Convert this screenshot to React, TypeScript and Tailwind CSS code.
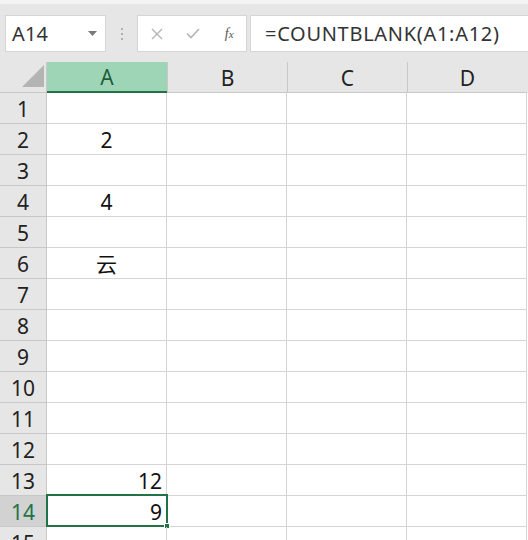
import React from "react";

const rows = Array.from({ length: 15 }, (_, i) => i + 1);
const values: Record<number, { v: string; align: "center" | "right" }> = {
  2: { v: "2", align: "center" },
  4: { v: "4", align: "center" },
  6: { v: "云", align: "center" },
  13: { v: "12", align: "right" },
  14: { v: "9", align: "right" },
};

const font = { fontFamily: '"Noto Sans", "Noto Sans CJK SC", sans-serif' };

export default function App() {
  return (
    <div className="w-[528px] h-[540px] overflow-hidden bg-white" style={font}>
      {/* toolbar */}
      <div className="h-[62px] bg-[#e6e6e6] flex flex-col">
        <div className="h-[4px] bg-[#f3f3f3]" />
        <div className="flex items-start pt-[11px] pl-[5px]">
          <div className="w-[101px] h-[37px] bg-white border border-[#d5d5d5] flex items-center justify-between pl-[6px] pr-[8px]">
            <span className="text-[20px] text-[#333] tracking-[0.2px]">A14</span>
            <svg width="9" height="5" viewBox="0 0 9 5">
              <path d="M0 0 L9 0 L4.5 5 Z" fill="#7a7a7a" />
            </svg>
          </div>
          <div className="w-[31px] h-[37px] flex flex-col items-center justify-center gap-[3px]">
            <div className="w-[2px] h-[2px] bg-[#b0b0b0]" />
            <div className="w-[2px] h-[2px] bg-[#b0b0b0]" />
            <div className="w-[2px] h-[2px] bg-[#b0b0b0]" />
          </div>
          <div className="w-[110px] h-[37px] bg-white border border-[#d5d5d5] flex items-center">
            <div className="w-[36px] flex justify-center ml-[1px]">
              <svg width="12" height="12" viewBox="0 0 12 12">
                <path d="M1 1 L11 11 M11 1 L1 11" stroke="#b5b5b5" strokeWidth="1.4" />
              </svg>
            </div>
            <div className="w-[38px] flex justify-center">
              <svg width="14" height="11" viewBox="0 0 14 11">
                <path d="M1 5.5 L5 9.5 L13 1" stroke="#b5b5b5" strokeWidth="1.6" fill="none" />
              </svg>
            </div>
            <div className="w-[34px] flex justify-center">
              <span
                className="text-[14px] text-[#555] italic"
                style={{ fontFamily: '"Liberation Serif", serif' }}
              >
                f<span className="text-[11px]">x</span>
              </span>
            </div>
          </div>
          <div className="ml-[3px] flex-1 h-[37px] bg-white border border-[#d5d5d5] border-r-0 flex items-center pl-[14px]">
            <span className="text-[20px] text-[#333] tracking-[0.7px]">=COUNTBLANK(A1:A12)</span>
          </div>
        </div>
      </div>

      {/* column header */}
      <div className="flex h-[31px] bg-[#e6e6e6]">
        <div className="w-[47px] h-[31px] border-r border-b border-[#c8c8c8] relative">
          <svg className="absolute left-[22px] top-[3px]" width="22" height="22" viewBox="0 0 22 22">
            <path d="M22 0 L22 22 L0 22 Z" fill="#b4b4b4" />
          </svg>
        </div>
        <div className="w-[120px] h-[31px] bg-[#9fd5b7] border-b-2 border-[#217346] flex items-center justify-center pt-[2px] text-[21px] text-[#1e5e3b]">
          A
        </div>
        {["B", "C", "D"].map((c) => (
          <div
            key={c}
            className="w-[120px] h-[31px] border-l border-b border-[#c8c8c8] flex items-center justify-center pt-[3px] text-[21px] text-[#222] first:border-l-0"
          >
            {c}
          </div>
        ))}
      </div>

      {/* rows */}
      {rows.map((r) => {
        const sel = r === 14;
        const val = values[r];
        return (
          <div key={r} className="flex h-[31px]">
            <div
              className={`w-[47px] h-[31px] border-r border-b border-[#c8c8c8] flex items-center justify-center pt-[3px] text-[21px] ${
                sel ? "bg-[#d2d2d2] text-[#217346]" : "bg-[#e6e6e6] text-[#222]"
              }`}
            >
              {r}
            </div>
            <div
              className={`w-[120px] h-[31px] border-r border-b border-[#d4d4d4] flex items-center pt-[3px] text-[21px] text-[#111] relative ${
                val?.align === "right" ? "justify-end pr-[4px]" : "justify-center"
              }`}
            >
              {val?.v}
              {sel && (
                <>
                  <div className="absolute left-[-1px] top-[-2px] w-[122px] h-[33px] border-2 border-[#217346]" />
                  <div className="absolute left-[117px] top-[27px] w-[6px] h-[6px] bg-[#217346] border border-white" />
                </>
              )}
            </div>
            {[0, 1, 2].map((i) => (
              <div key={i} className="w-[120px] h-[31px] border-r border-b border-[#d4d4d4]" />
            ))}
          </div>
        );
      })}
    </div>
  );
}
